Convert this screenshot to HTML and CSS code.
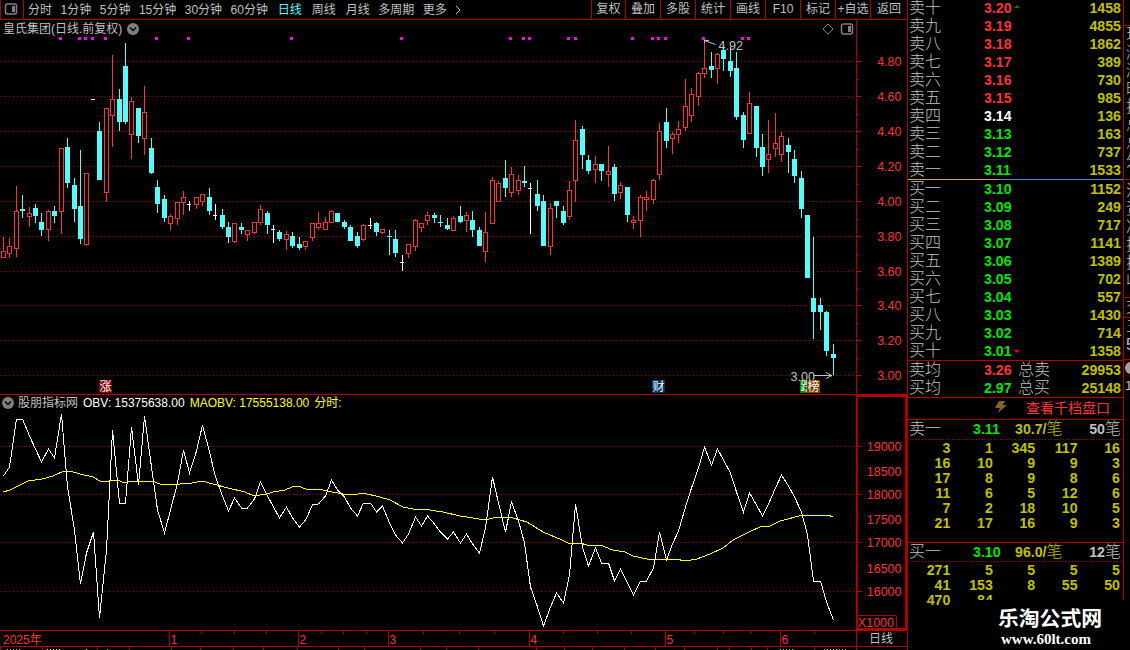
FILE: index.html
```html
<!DOCTYPE html>
<html lang="zh-CN">
<head>
    <meta charset="UTF-8">
    <title>皇氏集团 日线</title>
    <link rel="stylesheet" href="styles.css">
</head>
<body>
    <div class="app">
        <div class="main">
            <!-- Toolbar -->
            <div class="toolbar">
                <div class="layout-btn">
                    <svg width="14" height="12"><rect x="1.5" y="1" width="11" height="10" rx="2" class="icon-line"/><rect x="8" y="3" width="3" height="6" class="icon-fill"/></svg>
                </div>
                <div class="periods">
                    <span>分时</span><span>1分钟</span><span>5分钟</span><span>15分钟</span><span>30分钟</span><span>60分钟</span>
                    <span class="wide active">日线</span><span class="wide">周线</span><span class="wide">月线</span><span>多周期</span><span>更多</span>
                    <svg width="6" height="10"><path d="M1 1L5 5L1 9" class="chevron"/></svg>
                </div>
                <div class="tools">
                    <span>复权</span><span>叠加</span><span>多股</span><span>统计</span><span>画线</span><span>F10</span><span>标记</span><span>+自选</span><span>返回</span>
                </div>
            </div>

            <!-- Candle panel -->
            <div class="price-panel">
                <div class="plot">
                    <div class="plot-head">
                        <span>皇氏集团(日线.前复权)</span>
                        <svg class="drop" width="12" height="12"><circle cx="6" cy="6" r="6"/><path d="M3 4.5L6 7.5L9 4.5"/></svg>
                        <div class="head-icons">
                            <svg width="12" height="12"><path d="M6 1L11 6L6 11L1 6Z" class="icon-thin"/></svg>
                            <svg width="14" height="12"><rect x="1.5" y="1" width="11" height="10" rx="2" class="icon-line"/><rect x="8" y="3" width="3" height="6" class="icon-fill"/></svg>
                        </div>
                    </div>
                    <svg id="candles" width="856" height="357" viewBox="0 37 856 357"></svg>
                </div>
                <svg id="price-axis" class="axis" width="50" height="374" viewBox="857 20 50 374"></svg>
            </div>

            <!-- OBV panel -->
            <div class="obv-panel">
                <div class="plot">
                    <div class="plot-head obv-head">
                        <svg class="drop" width="12" height="12"><circle cx="6" cy="6" r="6"/><path d="M3 4.5L6 7.5L9 4.5"/></svg>
                        <span>股朋指标网</span>
                        <span class="white">OBV: 15375638.00</span>
                        <span class="yellow">MAOBV: 17555138.00</span>
                        <span class="yellow">分时:</span>
                    </div>
                    <svg id="obv" width="856" height="219" viewBox="0 411 856 219"></svg>
                </div>
                <svg id="obv-axis" class="axis" width="50" height="235" viewBox="857 395 50 235"></svg>
            </div>

            <!-- Date axis -->
            <div class="date-row">
                <svg id="dates" width="856" height="16" viewBox="0 630 856 16"></svg>
                <div class="period">日线</div>
            </div>
            <svg id="tabs" class="tabs" width="907" height="4" viewBox="0 646 907 4"></svg>
        </div>

        <!-- Order book -->
        <div class="book">
            <div class="levels" id="asks"></div>
            <div class="split"></div>
            <div class="levels" id="bids"></div>
            <div class="averages">
                <div class="avg"><span>卖均</span><b class="up">3.26</b><span>总卖</span><b class="vol">29953</b></div>
                <div class="avg"><span>买均</span><b class="down">2.97</b><span>总买</span><b class="vol">25148</b></div>
            </div>
            <div class="more">
                <svg width="12" height="12"><path d="M4 0H10L8 4H12L3 12L5 7H0Z"/></svg>
                <span>查看千档盘口</span>
            </div>
            <div class="queue ask-queue">
                <div class="queue-head"><span>卖一</span><b class="down">3.11</b><span class="vol"><b>30.7/</b>笔</span><span class="count"><b>50</b>笔</span></div>
                <div class="queue-grid" id="ask-queue"></div>
            </div>
            <div class="queue bid-queue">
                <div class="queue-head"><span>买一</span><b class="down">3.10</b><span class="vol"><b>96.0/</b>笔</span><span class="count"><b>12</b>笔</span></div>
                <div class="queue-grid" id="bid-queue"></div>
            </div>
        </div>

        <!-- Quote column, cut off by the window edge -->
        <div class="side">
            <div class="side-box side-a"><span>现</span><span>涨</span><span>涨</span><span>时</span><span>换</span><span>总</span><span>总</span><span>外</span></div>
            <div class="side-box side-b"><span>流</span><span>资</span><span>净</span><span>换</span><span>换</span><span>收</span></div>
            <div class="side-box side-c"><span>交</span></div>
            <div class="side-box side-d"><span>三</span><span><b>5</b></span></div>
            <div class="side-badge"><svg width="6" height="14"><circle cx="7" cy="7" r="6"/></svg></div>
            <div class="side-e">1</div>
        </div>

        <div class="watermark">
            <div class="wm-name">乐淘公式网</div>
            <div class="wm-url">www.60lt.com</div>
        </div>
    </div>

    <script>
        // type (r rise, c fall, w flat), high, low, body top, body bottom
        const candles = `r237,258,251,258 r238,258,246,254 r186,257,211,249 c195,218,209,211 r207,227,213,217 c204,223,208,216 c213,236,222,230 r210,241,211,230 c206,223,211,216 r148,234,148,212
c138,188,147,183 c178,222,185,209 c150,244,206,239 r173,246,173,245 w99,100,99,100 c122,180,131,180 r108,202,108,193 r55,147,99,116 c89,131,99,122 c43,124,66,122
r97,159,101,135 c108,143,108,136 r86,155,112,139 c138,174,148,173 c180,213,187,204 c195,222,199,218 r214,230,216,224 r202,225,202,219 r191,215,197,203 w201,211,204,205
r197,209,197,205 r194,206,194,202 c188,215,197,211 w204,220,215,216 c209,229,215,227 c222,243,227,237 r223,243,223,242 c223,234,227,230 r230,241,230,235 r222,234,222,233
r205,225,209,223 c211,234,213,225 w225,243,229,230 c230,241,232,239 r231,250,234,240 c232,248,236,246 c237,250,244,248 r241,250,241,247 r223,241,223,238 r212,230,223,228
r217,230,222,230 r210,223,211,223 c213,222,213,222 c220,229,222,227 c225,241,227,241 c232,248,236,246 r224,241,225,240 w218,229,225,226 c222,236,223,232 r229,234,229,233
c230,255,236,237 c230,257,239,253 w255,271,262,263 r244,258,244,254 r219,251,220,247 r223,232,223,228 r212,225,215,221 c213,223,215,218 c215,227,222,223 c218,230,225,229
r216,231,218,231 c206,223,216,222 r212,232,215,221 c211,237,220,230 c227,246,230,246 r212,262,232,252 r177,224,180,224 r181,202,183,202 c160,197,178,188 r167,197,174,193
r175,195,180,191 c166,187,181,183 w183,234,188,189 c180,211,194,206 c195,246,201,246 r203,255,208,247 c201,218,201,206 c206,225,211,223 r181,220,190,217 r120,202,140,181
c126,169,129,155 c155,174,160,171 r156,183,164,170 c164,181,164,171 r146,187,171,175 c164,201,167,194 r182,199,185,193 c187,222,187,215 r216,229,220,223 r195,237,197,221
r191,211,197,200 r179,204,180,200 r123,180,131,175 c108,148,122,141 r132,154,134,139 r121,143,129,135 r79,131,106,128 r88,122,94,116 r72,106,73,97 r43,78,68,74
c52,78,66,70 r53,84,54,69 c45,71,50,59 c47,77,61,71 c52,120,68,117 c112,148,115,140 r92,134,103,134 c106,157,106,148 c134,176,147,167 r120,173,154,160
r113,157,143,149 r132,162,136,155 c138,173,145,152 c150,183,159,176 c171,218,178,209 c215,278,215,278 c237,339,298,312 c298,330,305,312 c311,356,312,351 c344,375,354,358`.split(/\s+/);

        const obv = [476,467,419,419,436,449,462,449,458,414,487,530,584,553,532,618,550,430,503,503,427,485,416,467,510,533,510,483,450,473,451,425,452,477,496,511,498,508,508,499,482,496,507,518,507,518,
            527,520,505,504,496,480,490,497,508,516,503,503,512,506,523,535,543,534,517,526,516,524,532,539,532,543,534,544,553,528,477,503,532,502,521,543,587,607,626,607,593,603,575,504,
            547,566,548,563,563,581,569,583,595,581,581,568,532,560,544,531,507,488,468,447,465,449,460,473,492,512,493,505,516,504,488,475,486,497,512,535,581,581,602,620];

        const maobv = '3,492 10,490 28,481 42,479 53,476 64,471 70,471 80,474 93,477 100,481 107,482 111,480 117,480 125,483 131,481 138,482 142,481 152,481 160,484 177,485 183,483 192,483 202,481 213,484 228,488 245,492 254,496 267,494 273,492 285,490 292,487 298,486 306,489 319,489 327,491 343,494 358,494 363,493 380,497 390,500 403,507 413,509 423,509 443,512 460,516 473,518 485,520 497,517 513,518 527,522 543,532 562,540 568,543 580,543 587,545 600,545 613,550 625,552 633,556 647,559 675,559 686,561 697,559 710,554 723,548 733,540 747,533 762,526 770,526 780,521 803,515 828,515 833,517';

        const xAt = i => Math.floor(3.3 + 6.434 * i);
        const rect = (x, y, w, h, cls) => `<rect x="${x}" y="${y}" width="${w}" height="${h}" class="${cls}"/>`;
        const gridLine = y => `<path d="M1 ${y}.5H856" class="grid"/>`;
        const text = (x, y, s, cls) => `<text x="${x}" y="${y}" class="${cls}">${s}</text>`;
        const tag = (x, w, s, cls) => rect(x, 380, w, 13, cls) + text(x + 0.5, 391, s, 'tag-text');
        const draw = (id, html) => document.getElementById(id).innerHTML = html;

        // Candles
        const priceLines = [61, 96, 131, 166, 201, 236, 271, 305, 340, 375];
        let out = priceLines.map(gridLine).join('');
        out += [59,78,84,91,104,155,187,290,400,509,522,528,567,574,631,651,657,664,702,741,747].map(x => rect(x, 37, 3, 3, 'mark')).join('');
        out += text(718.5, 50, '4.92', 'note') + '<path d="M715.500 44.500L704.500 40.500M704.500 44V40.500H709" class="arrow"/>';
        candles.forEach((item, i) => {
            const [hi, lo, top, bottom] = item.slice(1).split(',').map(Number);
            const x = xAt(i);
            if (item[0] === 'r') {
                out += rect(x, hi, 1, top - hi, 'rise') + rect(x, bottom, 1, lo - bottom, 'rise');
                out += `<rect x="${x - 1.5}" y="${top + 0.5}" width="4" height="${bottom - top - 1}" class="hollow"/>`;
            } else {
                const cls = item[0] === 'c' ? 'fall' : 'flat';
                const wide = cls === 'fall' ? 5 : 4;
                out += rect(x, hi, 1, lo - hi, cls) + rect(x - 2, top, wide, bottom - top, cls);
            }
        });
        out += text(790.5, 381, '3.00', 'note') + '<path d="M813 375.500H832M826 372.500L832 375.500L826 378.500" class="arrow"/>';
        out += tag(99, 13, '涨', 'tag-red') + tag(652, 13, '财', 'tag-blue') + tag(800, 12, '跌', 'tag-green') + tag(807, 13, '榜', 'tag-brown');
        draw('candles', out);

        // Price axis
        out = '';
        priceLines.forEach((y, i) => {
            out += rect(857, y, 5, 1, 'line') + text(901.5, y + 5, (4.8 - i * 0.2).toFixed(2), 'axis-text');
            if (i < 9) out += rect(857, y + 18, 2, 1, 'line');
        });
        draw('price-axis', out);

        // OBV lines and axis
        draw('obv', [446, 494, 542, 591].map(gridLine).join('') +
            `<polyline points="${maobv}" class="maobv"/>` +
            `<polyline points="${obv.map((y, i) => xAt(i) + '.5,' + y).join(' ')}" class="obv"/>`);
        out = '';
        [446, 470, 494, 518, 542, 567, 591].forEach((y, i) => {
            out += rect(857, y, i % 2 ? 2 : 5, 1, 'line') + text(901.5, y + 5 + i % 2, 19000 - i * 500, 'axis-text');
        });
        out += '<path d="M857 615.500H896.500V629" class="frame"/>' + text(894, 627, 'X1000', 'axis-text') + '<rect x="857" y="396" width="49" height="233" class="axis-box"/>';
        draw('obv-axis', out);

        // Date axis and the tab strip under it
        out = text(3, 643, '2025年', 'date-text');
        [169, 298, 388, 529, 665, 780].forEach((x, i) => out += rect(x, 630, 1, 16, 'line') + text(x + 1.5, 643, i + 1, 'date-text'));
        [201,234,266,321,343,366,423,459,494,563,597,631,694,723,751,814].forEach(x => out += rect(x, 630, 1, 3, 'line'));
        draw('dates', out);
        out = rect(0, 646, 907, 1, 'line');
        [0,42,97,129,171,200,233,263,297,338,364,420,446,478,536,564,592,624,655,684,717,729,751,767,814,856].forEach(x => out += rect(x, 646, 1, 4, 'line'));
        out += '<path d="M7 649.500H21M107 649.500H109M780 649.500H794M824 649.500H848" class="tab-grey"/><path d="M47 649.500H62M86 649.500H88" class="tab-yellow"/>';
        draw('tabs', out);

        // Order book
        const names = ['一', '二', '三', '四', '五', '六', '七', '八', '九', '十'];
        const askVol = [1458, 4855, 1862, 389, 730, 985, 136, 163, 737, 1533];
        const bidVol = [1152, 249, 717, 1141, 1389, 702, 557, 1430, 714, 1358];
        const level = (name, price, vol, arrow) => {
            const cls = price > 3.14 ? 'up' : price < 3.14 ? 'down' : 'white';
            return `<div class="level"><span>${name}</span><b class="${cls}">${price.toFixed(2)}</b><i class="${arrow}"></i><b class="vol">${vol}</b></div>`;
        };
        draw('asks', askVol.map((v, i) => level('卖' + names[9 - i], (320 - i) / 100, v, i === 0 ? 'arrow-up' : '')).join(''));
        draw('bids', bidVol.map((v, i) => level('买' + names[i], (310 - i) / 100, v, i === 9 ? 'arrow-down' : '')).join(''));

        const cells = list => list.map(n => `<b>${n}</b>`).join('');
        draw('ask-queue', cells([3,1,345,117,16, 16,10,9,9,3, 17,8,9,8,6, 11,6,5,12,6, 7,2,18,10,5, 21,17,16,9,3]));
        draw('bid-queue', cells([271,5,5,5,5, 41,153,8,55,50, 470,84]));
    </script>
</body>
</html>
```
FILE: styles.css
```css
* {
    box-sizing: border-box;
}

body {
    margin: 0;
    background-color: #000;
    color: #c0c0c0;
    font-family: "Liberation Sans", "Noto Sans CJK SC", sans-serif;
    font-size: 12px;
    overflow: hidden;
}

svg {
    display: block;
    flex: none;
}

.app {
    position: relative;
    display: grid;
    grid-template-columns: 907px 217px 6px;
    width: 1130px;
    height: 650px;
    overflow: hidden;
}

.main {
    display: flex;
    flex-direction: column;
    height: 650px;
}

/* Toolbar */
.toolbar {
    display: flex;
    height: 20px;
    border-bottom: 1px solid #b00000;
    line-height: 18px;
    white-space: nowrap;
}

.layout-btn {
    width: 24px;
    padding: 3px 0 0 3px;
    border-left: 1px solid #b00000;
    border-right: 1px solid #b00000;
}

.periods {
    display: flex;
    flex: 1;
    align-items: center;
    gap: 8.5px;
    padding-left: 4px;
}

.periods .wide {
    margin-left: 1.4px;
}

.active {
    color: #54fcfc;
}

.chevron {
    fill: none;
    stroke: #c0c0c0;
}

.tools {
    display: grid;
    grid-template-columns: 34px repeat(7, 35px) 37px;
    text-align: center;
}

.tools span {
    border-left: 1px solid #b00000;
}

/* Panels */
.price-panel {
    display: flex;
    height: 374px;
}

.obv-panel {
    display: flex;
    height: 236px;
    border-top: 1px solid #b00000;
}

.plot {
    width: 856px;
}

.plot-head {
    display: flex;
    align-items: center;
    gap: 5px;
    height: 17px;
    padding: 1px 3px 0;
    line-height: 16px;
}

.obv-head {
    height: 16px;
    padding: 0 2px;
}

.obv-head span:nth-of-type(1) {
    margin-left: -1px;
}

.head-icons {
    display: flex;
    gap: 6px;
    margin-right: -1px;
    margin-left: auto;
}

.axis {
    border-left: 1px solid #b00000;
    width: 51px;
    overflow: hidden;
}

.drop circle {
    fill: #808080;
}

.drop path {
    fill: none;
    stroke: #000;
    stroke-width: 1.4;
}

.icon-line {
    fill: none;
    stroke: #808080;
    stroke-width: 1.5;
}

.icon-thin {
    fill: none;
    stroke: #808080;
}

.icon-fill {
    fill: #808080;
}

.white {
    color: #fff;
}

.yellow {
    color: #ff0;
}

/* Chart shapes */
.line {
    fill: #b00000;
}

.grid {
    stroke: #b00000;
    stroke-dasharray: 1 3;
}

.mark {
    fill: #f0f;
}

.rise {
    fill: #ff3232;
}

.hollow {
    fill: #000;
    stroke: #ff3232;
}

.fall {
    fill: #54fcfc;
}

.flat {
    fill: #fff;
}

.arrow,
.tab-grey {
    fill: none;
    stroke: #c0c0c0;
}

.tab-grey,
.tab-yellow {
    stroke-dasharray: 1 2;
}

.tab-yellow {
    stroke: #ff0;
}

.note {
    fill: #c0c0c0;
    font-size: 12.5px;
}

.obv,
.maobv {
    fill: none;
    stroke: #fff;
    shape-rendering: crispEdges;
}

.maobv {
    stroke: #ff0;
}

.axis-text {
    fill: #ff3232;
    font-size: 12.5px;
    text-anchor: end;
}

.date-text {
    fill: #ff3232;
    font-size: 12px;
}

.frame {
    fill: none;
    stroke: #b00000;
}

.axis-box {
    fill: none;
    stroke: #b00000;
    stroke-width: 2;
}

.tag-text {
    fill: #fff;
    font-size: 12px;
}

.tag-red {
    fill: #800000;
}

.tag-blue {
    fill: #003264;
}

.tag-green {
    fill: #008000;
}

.tag-brown {
    fill: #804000;
}

/* Date row */
.date-row {
    display: flex;
    height: 16px;
    border-top: 1px solid #b00000;
    line-height: 16px;
}

.period {
    width: 51px;
    padding-left: 12px;
    border-left: 1px solid #b00000;
}

/* Order book */
.book {
    height: 650px;
    border-left: 1px solid #b00000;
    border-right: 1px solid #b00000;
    overflow: hidden;
    font-size: 16px;
    font-weight: 300;
}

.book b {
    font-size: 14.2px;
    font-weight: 700;
}

.levels {
    height: 180px;
}

#asks {
    margin-top: -1px;
}

.split {
    height: 1px;
    background: linear-gradient(to right, #e0a040 90px, #4a90e0 90px);
}

.level,
.avg {
    display: grid;
    grid-template-columns: 75px 30px 1fr auto;
    align-items: center;
    height: 18px;
    padding: 0 2px 0 1px;
    line-height: 18px;
}

.averages {
    height: 38px;
    border-top: 1px solid #b00000;
    border-bottom: 1px solid #b00000;
}

.avg {
    grid-template-columns: 75px 34px 1fr auto;
}

.up {
    color: #ff3232;
}

.down {
    color: #00e600;
}

.vol {
    color: #c0c000;
}

.arrow-up,
.arrow-down {
    width: 0;
    border: 3px solid transparent;
}

.arrow-up {
    border-top: 0;
    border-bottom-color: #008000;
    margin-bottom: 3px;
}

.arrow-down {
    border-bottom: 0;
    border-top-color: #f00;
}

.more {
    display: flex;
    align-items: center;
    gap: 19px;
    height: 21px;
    padding: 0 0 3px 87px;
    color: #ff3232;
    font-size: 14px;
    font-weight: 400;
}

.more path {
    fill: #806428;
}

.queue {
    border-top: 1px solid #b00000;
}

.ask-queue {
    height: 123px;
}

.queue-head {
    display: grid;
    grid-template-columns: 63px 43px 1fr auto;
    align-items: center;
    height: 20px;
    margin: 0 2px;
    background: repeating-linear-gradient(to right, #b00000 0 1px, transparent 1px 3px) bottom / 100% 1px no-repeat;
    line-height: 18px;
    padding-bottom: 2px;
}

.bid-queue .queue-head {
    height: 19px;
}

.queue-head > span {
    margin-left: -1px;
    white-space: nowrap;
}

.count b {
    color: #c0c0c0;
}

.queue-grid {
    display: grid;
    grid-template-columns: repeat(5, 1fr);
    grid-auto-rows: 15px;
    padding: 1px 3px 0 0;
    color: #c0c000;
    line-height: 15px;
    text-align: right;
}

/* Side column */
.side {
    overflow: hidden;
    padding-top: 25px;
    font-size: 16px;
    font-weight: 300;
    line-height: 18px;
}

.side-box {
    padding-left: 2px;
    border-top: 1px solid #b00000;
}

.side-box span {
    display: block;
    width: 16px;
    height: 18px;
}

.side-a {
    height: 154px;
}

.side-b {
    height: 118px;
    padding-top: 2px;
}

.side-c {
    height: 20px;
}

.side-d {
    height: 42px;
}

.side-badge {
    height: 18px;
    padding-top: 1px;
    border-top: 1px solid #b00000;
    background-color: #280000;
}

.side-badge circle {
    fill: #a0a0a0;
}

.side-e {
    padding-left: 1px;
    font-size: 13px;
}

/* Watermark over the book's lower corner */
.watermark {
    position: absolute;
    right: 0;
    bottom: 0;
    width: 155px;
    height: 50px;
    padding: 8px 0 0 23px;
    background-color: #000;
    color: #fff;
    font-weight: bold;
}

.wm-name {
    font-size: 20.8px;
    line-height: 22px;
}

.wm-url {
    padding-left: 3px;
    font-family: "Liberation Serif", serif;
    font-size: 15px;
    line-height: 18px;
}
```
